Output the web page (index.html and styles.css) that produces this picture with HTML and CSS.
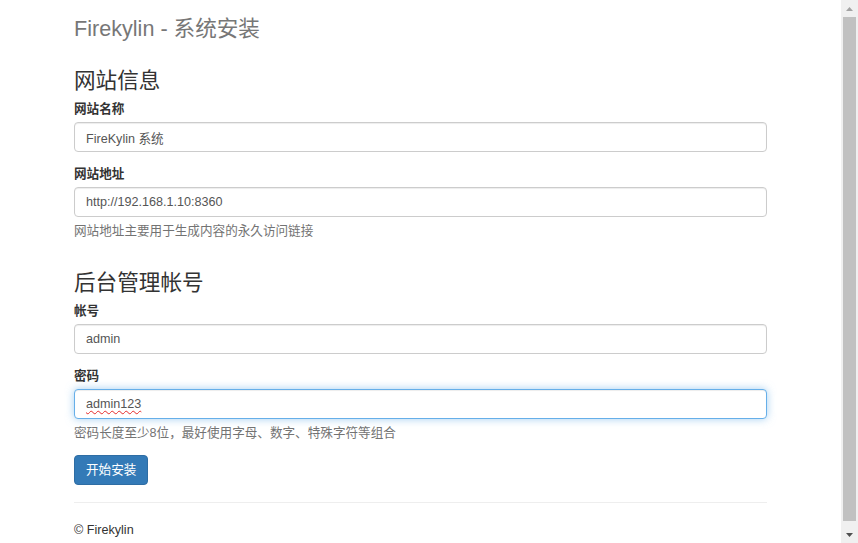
FILE: index.html
```html
<!DOCTYPE html>
<html lang="zh-CN">
<head>
<meta charset="utf-8">
<title>Firekylin - 系统安装</title>
<link rel="stylesheet" href="styles.css">
</head>
<body>
<div class="page">
  <div class="container">
    <h3 class="title">Firekylin - 系统安装</h3>
    <form class="install-form">
      <section class="section">
        <h3 class="section-title">网站信息</h3>
        <div class="form-group">
          <label class="label">网站名称</label>
          <input class="form-control" type="text" value="FireKylin 系统">
        </div>
        <div class="form-group">
          <label class="label">网站地址</label>
          <input class="form-control" type="text" value="http://192.168.1.10:8360">
          <span class="help-block">网站地址主要用于生成内容的永久访问链接</span>
        </div>
      </section>
      <section class="section">
        <h3 class="section-title">后台管理帐号</h3>
        <div class="form-group">
          <label class="label">帐号</label>
          <input class="form-control" type="text" value="admin">
        </div>
        <div class="form-group">
          <label class="label">密码</label>
          <div class="field-wrap">
            <input class="form-control is-focus" type="text" value="admin123">
            <span class="spell-mark" aria-hidden="true">admin123</span>
          </div>
          <span class="help-block">密码长度至少8位，最好使用字母、数字、特殊字符等组合</span>
        </div>
      </section>
      <div class="actions">
        <button class="btn" type="button">开始安装</button>
      </div>
    </form>
    <hr class="divider">
    <footer class="footer">© Firekylin</footer>
  </div>
</div>
<div class="scrollbar" aria-hidden="true">
  <div class="sb-btn">
    <svg width="7" height="4" viewBox="0 0 7 4"><path d="M0 4 L3.5 0 L7 4 Z" fill="#a3a3a3"/></svg>
  </div>
  <div class="sb-track">
    <div class="sb-thumb"></div>
  </div>
  <div class="sb-btn">
    <svg width="7" height="4" viewBox="0 0 7 4"><path d="M0 0 L7 0 L3.5 4 Z" fill="#505050"/></svg>
  </div>
</div>
</body>
</html>
```

FILE: styles.css
```css
html, body {
  margin: 0;
  height: 100%;
  overflow: hidden;
}

body {
  display: flex;
  background: #fff;
  color: #333;
  font-family: "Liberation Sans", "Noto Sans CJK SC", sans-serif;
  font-size: 12.6px;
  line-height: 18px;
}

.page {
  flex: 1;
  min-width: 0;
}

.container {
  width: 693px;
  margin: 0 auto;
}

.title {
  margin: 0;
  padding-top: 17px;
  font-size: 21.6px;
  line-height: 24px;
  font-weight: 400;
  color: #777;
}

.install-form {
  margin: 0;
}

.section {
  margin-top: 28px;
}

.section + .section {
  margin-top: 31px;
}

.section-title {
  margin: 0 0 7px;
  font-size: 21.6px;
  line-height: 24px;
  font-weight: 400;
  color: #333;
}

.form-group {
  margin-bottom: 13px;
}

.label {
  display: block;
  margin-bottom: 4px;
  font-weight: 700;
  line-height: 18px;
}

.form-control {
  display: block;
  width: 100%;
  height: 30px;
  box-sizing: border-box;
  margin: 0;
  padding: 5px 11px;
  font-family: inherit;
  font-size: 12.6px;
  line-height: 18px;
  color: #555;
  background: #fff;
  border: 1px solid #ccc;
  border-radius: 4px;
  box-shadow: inset 0 1px 1px rgba(0, 0, 0, 0.075);
  outline: none;
}

.is-focus {
  border-color: #66afe9;
  box-shadow: inset 0 1px 1px rgba(0, 0, 0, 0.075), 0 0 8px rgba(102, 175, 233, 0.6);
}

.field-wrap {
  position: relative;
}

.spell-mark {
  position: absolute;
  left: 12px;
  top: 6px;
  font-size: 12.6px;
  line-height: 18px;
  color: transparent;
  pointer-events: none;
  text-decoration: underline wavy #e52b2b;
  text-decoration-thickness: 1px;
  text-underline-offset: 2px;
}

.help-block {
  display: block;
  margin-top: 5px;
  color: #737373;
}

.actions {
  margin: 0;
}

.btn {
  display: inline-block;
  margin: 0;
  padding: 5px 11px;
  font-family: inherit;
  font-size: 12.6px;
  line-height: 18px;
  color: #fff;
  background: #337ab7;
  border: 1px solid #2e6da4;
  border-radius: 4px;
  cursor: pointer;
}

.divider {
  margin: 17px 0 18px;
  border: 0;
  border-top: 1px solid #eee;
  height: 0;
}

.footer {
  line-height: 18px;
}

.scrollbar {
  width: 17px;
  flex: none;
  display: flex;
  flex-direction: column;
  background: #f0f0f0;
}

.sb-btn {
  height: 17px;
  display: flex;
  align-items: center;
  justify-content: center;
}

.sb-track {
  flex: 1;
  padding: 0 2px;
}

.sb-thumb {
  height: 504px;
  background: #c1c1c1;
}
```
